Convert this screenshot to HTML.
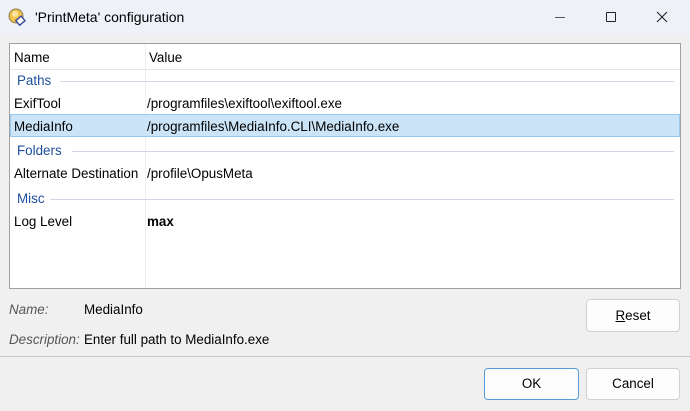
<!DOCTYPE html>
<html><head><style>
*{margin:0;padding:0;box-sizing:border-box}
body{width:690px;height:411px;overflow:hidden;background:#f0f0f0;font-family:"Liberation Sans",sans-serif;font-size:13.4px;color:#000;position:relative}
.abs{position:absolute}
#title{left:0;top:0;width:690px;height:35px;background:#eef2f8}
#list{left:9px;top:43px;width:672px;height:246px;background:#fff;border:1px solid #a0a0a0}
.t{position:absolute;white-space:nowrap}
.grp{color:#1f4e9c}
.gl{position:absolute;height:1px;background:#d0d8e8;right:6px}
.btn{position:absolute;background:#fdfdfd;border:1px solid #d0d0d0;border-radius:4px;text-align:center;font-size:13.4px}
</style></head><body>
<div class="abs" id="title">
<svg class="abs" style="left:8px;top:8px" width="20" height="20" viewBox="0 0 20 20"><circle cx="8" cy="8" r="7" fill="#f2c24a" stroke="#8a7a50" stroke-width="1"/><circle cx="7" cy="6" r="3" fill="#fbe5a0"/><rect x="9" y="10" width="7" height="6" transform="rotate(-40 12 13)" fill="#fff" stroke="#3a4a9a" stroke-width="1.4"/></svg>
<div class="t" style="left:35px;top:9px;font-size:14px">'PrintMeta' configuration</div>
<div class="abs" style="left:555px;top:17px;width:10px;height:1px;background:#555"></div>
<div class="abs" style="left:606px;top:12px;width:10px;height:10px;border:1px solid #222;border-radius:1px"></div>
<svg class="abs" style="left:656px;top:11px" width="12" height="12"><path d="M1 1L11 11M11 1L1 11" stroke="#222" stroke-width="1.1"/></svg>
</div>
<div class="abs" id="list">
<div class="abs" style="left:0;top:0;width:670px;height:26px;border-bottom:1px solid #e5e5e5"></div>
<div class="abs" style="left:135px;top:0;width:1px;height:244px;background:#eceff4"></div>
<div class="t" style="left:4px;top:6px">Name</div>
<div class="t" style="left:139px;top:6px">Value</div>
<div class="t grp" style="left:7px;top:29px">Paths</div><div class="gl" style="left:50px;top:37px"></div>
<div class="t" style="left:4px;top:52px">ExifTool</div><div class="t" style="left:137px;top:52px">/programfiles\exiftool\exiftool.exe</div>
<div class="abs" style="left:0;top:70px;width:670px;height:23px;background:#cce4f7;border:1px solid #99c9ef"></div>
<div class="t" style="left:4px;top:75px">MediaInfo</div><div class="t" style="left:137px;top:75px">/programfiles\MediaInfo.CLI\MediaInfo.exe</div>
<div class="t grp" style="left:7px;top:99px">Folders</div><div class="gl" style="left:62px;top:107px"></div>
<div class="t" style="left:4px;top:122px">Alternate Destination</div><div class="t" style="left:137px;top:122px">/profile\OpusMeta</div>
<div class="t grp" style="left:7px;top:147px">Misc</div><div class="gl" style="left:40px;top:155px"></div>
<div class="t" style="left:4px;top:170px">Log Level</div><div class="t" style="left:137px;top:170px;font-weight:bold">max</div>
</div>
<div class="t" style="left:9px;top:302px;font-style:italic;color:#555">Name:</div>
<div class="t" style="left:84px;top:302px">MediaInfo</div>
<div class="t" style="left:9px;top:332px;font-style:italic;color:#555">Description:</div>
<div class="t" style="left:84px;top:332px">Enter full path to MediaInfo.exe</div>
<div class="btn" style="left:586px;top:299px;width:94px;height:33px;line-height:31px"><u>R</u>eset</div>
<div class="abs" style="left:0;top:356px;width:690px;height:1px;background:#c8c8c8"></div>
<div class="btn" style="left:484px;top:368px;width:95px;height:32px;line-height:30px;border:1px solid #5a9bd5">OK</div>
<div class="btn" style="left:586px;top:368px;width:94px;height:32px;line-height:30px">Cancel</div>
</body></html>
